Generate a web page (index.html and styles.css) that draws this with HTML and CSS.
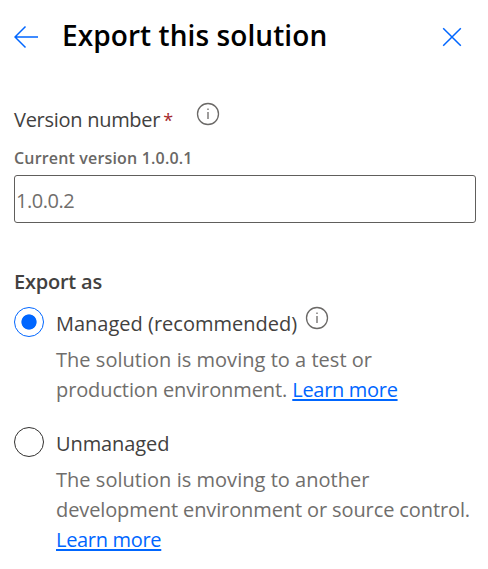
FILE: index.html
```html
<!DOCTYPE html>
<html lang="en">
<head>
<meta charset="utf-8">
<title>Export this solution</title>
<link rel="stylesheet" href="styles.css">
</head>
<body>
<main class="panel">
  <header class="header">
    <svg class="back" width="26" height="24" viewBox="0 0 26 24"><path d="M24 12H1M11.500 1.500L1 12l10.500 10.500"/></svg>
    <h1>Export this solution</h1>
    <svg class="close" width="20" height="20" viewBox="0 0 20 20"><path d="M1.200 1.200l17.600 17.600M18.800 1.200l-17.600 17.600"/></svg>
  </header>
  <div class="label-row">
    <label class="version" for="version">Version number</label><span class="required">*</span>
    <svg class="info" width="24" height="24" viewBox="0 0 24 24"><circle cx="12" cy="12" r="10.500"/><path d="M12 10v7M12 6.500v1.500"/></svg>
  </div>
  <p class="current">Current version 1.0.0.1</p>
  <input class="input" id="version" type="text" value="1.0.0.2">
  <h2>Export as</h2>
  <section class="option">
    <span class="radio checked"></span>
    <div class="body">
      <div class="name">Managed (recommended)<svg class="info" width="24" height="24" viewBox="0 0 24 24"><circle cx="12" cy="12" r="10.500"/><path d="M12 10v7M12 6.500v1.500"/></svg></div>
      <p><span class="wide">The solution is moving to a test or</span><br><span class="tight">production environment.</span> <a href="#">Learn more</a></p>
    </div>
  </section>
  <section class="option">
    <span class="radio"></span>
    <div class="body">
      <div class="name unmanaged">Unmanaged</div>
      <p><span class="wide">The solution is moving to another</span><br><span class="tight">development environment or source control.</span><br><a href="#">Learn more</a></p>
    </div>
  </section>
</main>
</body>
</html>
```
FILE: styles.css
```css
* { box-sizing: border-box; }
body { margin: 0; background: #fff; color: #424140; font: 20px/30px "Open Sans", sans-serif; white-space: nowrap; }
.panel { width: 488px; height: 569px; padding: 16px 12px 0 14px; overflow: hidden; }
svg { fill: none; flex: none; }
h1, h2, p { margin: 0; }
.header { display: flex; align-items: center; height: 40px; }
.back, .close { stroke: #0066ff; stroke-width: 1.5; }
.back { margin-top: 2px; }
h1 { margin: -2px 0 0 22px; color: #000; font-size: 28px; font-weight: 600; letter-spacing: .08px; }
.close { margin: 2px 14px 0 auto; }
.label-row { display: flex; align-items: center; height: 30px; margin-top: 49px; }
.version { letter-spacing: -.28px; }
.required { margin-left: 3px; color: #a4262c; font-size: 18px; }
.info { margin: -12px 0 0 23px; stroke: #6b6967; stroke-width: 1.3; }
.current { height: 24px; margin-top: 11px; color: #696765; font-size: 16px; line-height: 24px; font-weight: 600; letter-spacing: .17px; }
.input { display: block; width: 462px; height: 48px; margin-top: 5px; padding: 3px 1px 0; border: 1px solid #605e5c; border-radius: 3px; color: #706e6c; font: inherit; letter-spacing: -.45px; }
h2 { margin-top: 44px; font-size: 20px; line-height: 30px; font-weight: 600; letter-spacing: -.22px; }
.option { display: flex; height: 120px; margin-top: 11px; }
.option + .option { margin-top: 0; }
.radio { width: 30px; height: 30px; border: 1px solid #323130; border-radius: 50%; margin-top: -1px; }
.checked { border-color: #0066ff; background: radial-gradient(circle, #0066ff 7.2px, #fff 8px); }
.body { margin-left: 12px; }
.name { height: 40px; display: flex; align-items: center; margin-top: -4px; }
.name .info { margin: -12px 0 0 8px; }
.unmanaged { letter-spacing: -.1px; }
.body p { margin-top: 1px; color: #706e6c; }
.wide { letter-spacing: .03px; }
.tight { letter-spacing: -.11px; }
a { color: #0066ff; letter-spacing: -.31px; text-decoration-thickness: 2px; text-underline-offset: 2px; }
```
